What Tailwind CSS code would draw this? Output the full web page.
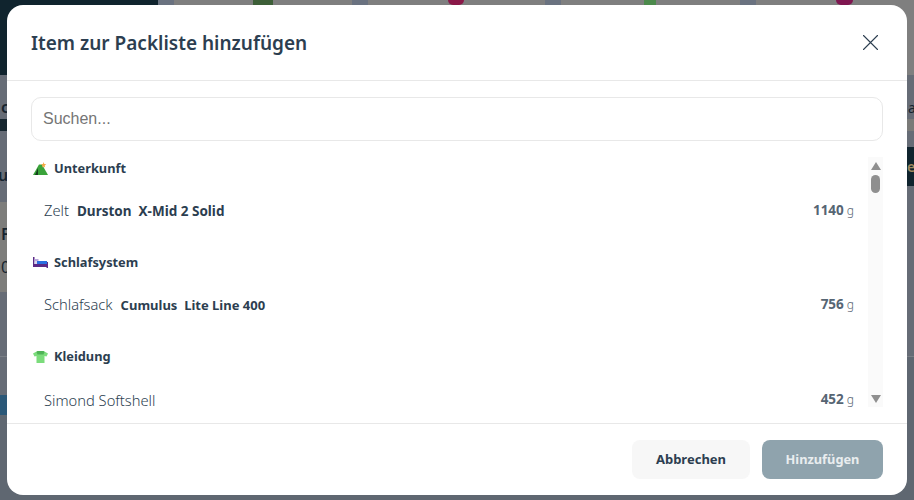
<!DOCTYPE html>
<html lang="de">
<head>
    <meta charset="UTF-8">
    <title>Packliste</title>
    <script src="https://cdn.jsdelivr.net/npm/@tailwindcss/browser@4"></script>
</head>
<body class="bg-[#666c76]">
<div class="relative w-[914px] h-[500px] overflow-hidden font-['Noto_Sans',sans-serif] text-[#2c3e50]">

    <!-- Page behind the dimmed backdrop -->
    <div class="flex h-full text-[#16242f] text-base font-semibold">
        <div class="w-[158px] flex flex-col">
            <div class="h-[75px] bg-[#10242e]"></div>
            <div class="h-[44px] bg-[#666c76] flex items-end"><span class="ml-[1px] leading-6">c</span></div>
            <div class="h-[12px] bg-[#16262f]"></div>
            <div class="h-[71px] bg-[#666c76] flex items-end pb-[15px]"><span class="-ml-[2px] leading-6">u</span></div>
            <div class="h-[90px] bg-[#7d7d7b] pt-[20px] pl-[1px]">
                <p class="leading-6">F</p>
                <p class="mt-[9px] leading-6 font-normal">0</p>
            </div>
            <div class="h-[65px] bg-[#666c76] border-b border-[#7a7f86]"></div>
            <div class="h-[58px] bg-[#666c76] flex items-end"><div class="h-[20px] w-full bg-[#2b5878]"></div></div>
            <div class="flex-1 bg-[#5f6771]"></div>
        </div>
        <div class="flex-1 flex flex-col">
            <div class="h-[75px] bg-[#7f7f7f] flex items-start">
                <div class="w-[16px] h-[5px] bg-[#6a7280]"></div>
                <div class="ml-[79px] w-[20px] h-[5px] bg-[#3d5f38]"></div>
                <div class="ml-[79px] w-[16px] h-[5px] bg-[#6a7280]"></div>
                <div class="ml-[80px] w-[16px] h-[5px] rounded-b-full bg-[#8a1848]"></div>
                <div class="ml-[81px] w-[16px] h-[5px] bg-[#6a7280]"></div>
                <div class="ml-[83px] w-[12px] h-[5px] bg-[#4c8a4c]"></div>
                <div class="ml-[84px] w-[16px] h-[5px] bg-[#6a7280]"></div>
                <div class="ml-[80px] w-[17px] h-[5px] rounded-b-full bg-[#7f1650]"></div>
            </div>
            <div class="h-[44px] bg-[#666c76] flex items-end justify-end pb-[1px] font-normal text-sm"><span class="w-[6px] overflow-hidden">a</span></div>
            <div class="h-[12px] bg-[#7a7a78]"></div>
            <div class="h-[16px] bg-[#666c76]"></div>
            <div class="h-[39px] bg-[#10242e] flex items-center justify-end text-[#a08a60] text-sm"><span class="w-[7px] overflow-hidden">er</span></div>
            <div class="h-[171px] bg-[#666c76] border-b border-[#7a7f86]"></div>
            <div class="flex-1 bg-[#5f6771]"></div>
        </div>
    </div>

    <!-- Modal -->
    <div class="absolute left-[7px] top-[5px] w-[900px] h-[490px] bg-white rounded-2xl flex flex-col">
        <div class="h-[76px] shrink-0 border-b border-[#e8e8e8] flex items-center justify-between pl-6 pr-[29px]">
            <h2 class="mt-[2px] text-[19px] font-semibold">Item zur Packliste hinzufügen</h2>
            <svg width="15" height="15" viewBox="0 0 15 15" fill="none" stroke="#2c3e50" stroke-width="1.1" stroke-linecap="round"><path d="M.5.500l14 14M14.500.500l-14 14"/></svg>
        </div>

        <div class="flex-1 min-h-0 flex flex-col px-6 pt-4 pb-4">
            <input type="text" placeholder="Suchen..." class="shrink-0 w-full h-[44px] pl-[11px] pr-3 border border-[#e8e8e8] rounded-[10px] text-base font-['Liberation_Sans',sans-serif] placeholder:text-[#757575] outline-none">

            <div class="flex-1 min-h-0 flex mt-4">
                <div class="flex-1 min-w-0 overflow-hidden">
                    <!-- Unterkunft -->
                    <div class="h-[23px] flex items-center gap-[6px] pl-[2px] text-[12.8px] font-bold">
                        <svg width="15" height="13" viewBox="0 0 15 13"><path d="M0 13L6 2.500h3L15 13z" fill="#3aa33a"/><path d="M2 13L5 6v7z" fill="#14401c"/><path d="M10.500 0l.8 2 2 .3-1.600 1.300.4 2-1.600-1-1.500.8.500-2-1.500-1.200 2-.2z" fill="#f5a742"/></svg>
                        Unterkunft
                    </div>
                    <div class="h-[60px] mb-[11px] flex items-center justify-between pl-[13px] pr-[14px]">
                        <div class="flex items-baseline gap-[8px] text-[14.7px] font-light">Zelt <b class="text-[13.5px] font-bold whitespace-pre">Durston  X-Mid 2 Solid</b></div>
                        <div class="flex items-baseline gap-[3px] text-[13.5px] font-bold text-[#566573]">1140 <span class="text-xs font-light">g</span></div>
                    </div>

                    <!-- Schlafsystem -->
                    <div class="h-[23px] flex items-center gap-[6px] pl-[2px] text-[12.8px] font-bold">
                        <svg width="15" height="11" viewBox="0 0 15 11"><path d="M0 0h1.500v10H0zM13.500 5H15v6h-1.500z" fill="#5b2a86"/><path d="M1.500 2h4v2.500h-4z" fill="#b9a7dc"/><path d="M4 4h10v3H4z" fill="#2a6fe0"/><path d="M1.500 4.500H4V7H1.500z" fill="#d9d4ee"/><path d="M0 7h15v3H0z" fill="#5b2a86"/></svg>
                        Schlafsystem
                    </div>
                    <div class="h-[60px] mb-[11px] flex items-center justify-between pl-[13px] pr-[14px]">
                        <div class="flex items-baseline gap-2 text-[14.7px] font-light">Schlafsack <b class="text-[13px] font-bold whitespace-pre">Cumulus  Lite Line 400</b></div>
                        <div class="flex items-baseline gap-[3px] text-[13.5px] font-bold text-[#566573]">756 <span class="text-xs font-light">g</span></div>
                    </div>

                    <!-- Kleidung -->
                    <div class="h-[23px] flex items-center gap-[6px] pl-[2px] text-[12.8px] font-bold">
                        <svg width="15" height="12" viewBox="0 0 15 12"><path d="M4.500 0h6L15 2.500 13.500 5.500 11.500 5v7h-8V5l-2 .5L0 2.500z" fill="#7bdc7b"/><path d="M4.500 0h6l1 1-1 2.500h-6L3.500 1z" fill="#4fb356"/></svg>
                        Kleidung
                    </div>
                    <div class="h-[62px] flex items-center justify-between pl-[13px] pr-[14px]">
                        <div class="mt-[3px] text-[14.7px] font-light">Simond Softshell</div>
                        <div class="flex items-baseline gap-[3px] text-[13.5px] font-bold text-[#566573]">452 <span class="text-xs font-light">g</span></div>
                    </div>
                </div>

                <!-- Scrollbar -->
                <div class="w-[15px] shrink-0 bg-[#fafafa] flex flex-col items-center pt-[5px] pb-[4px]">
                    <div class="w-0 h-0 border-x-[5px] border-x-transparent border-b-[8px] border-b-[#8f8f8f]"></div>
                    <div class="mt-[5px] w-[9px] h-[18px] rounded-full bg-[#8f8f8f]"></div>
                    <div class="mt-auto w-0 h-0 border-x-[5px] border-x-transparent border-t-[8px] border-t-[#8f8f8f]"></div>
                </div>
            </div>
        </div>

        <div class="h-[72px] shrink-0 border-t border-[#e8e8e8] flex items-start justify-end gap-3 pt-4 pr-6">
            <button class="w-[118px] h-[39px] rounded-lg bg-[#f7f7f7] text-[13px] font-bold">Abbrechen</button>
            <button class="w-[121px] h-[39px] rounded-lg bg-[#8fa3ad] text-[12.8px] font-bold text-[#e9edef]">Hinzufügen</button>
        </div>
    </div>
</div>
</body>
</html>
